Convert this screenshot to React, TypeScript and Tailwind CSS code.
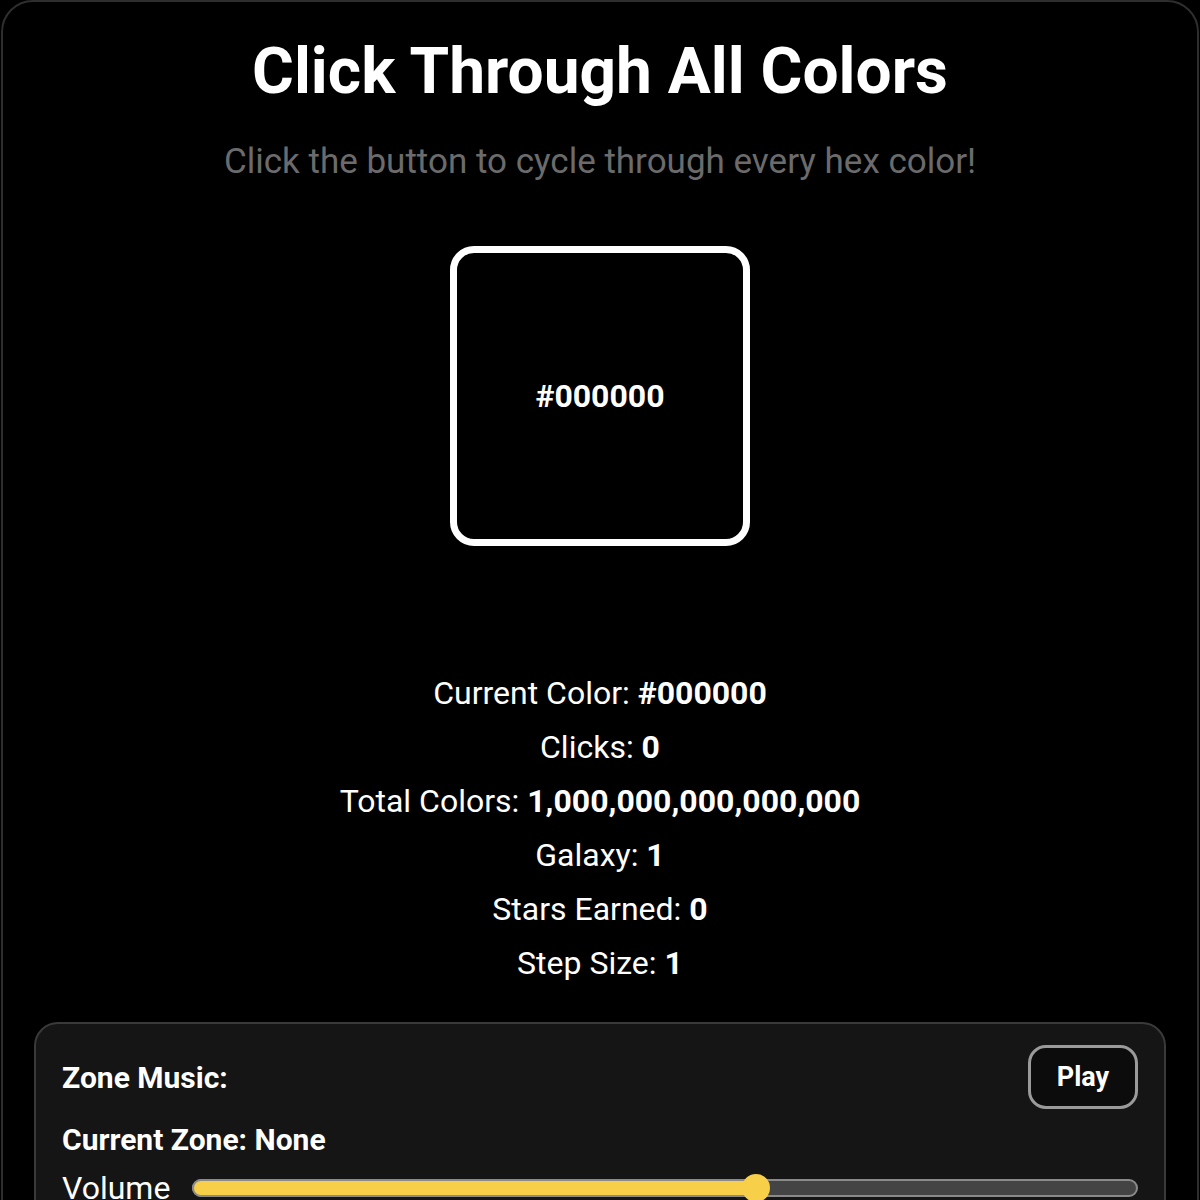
import { useState } from "react"

const stats = [
    { label: "Current Color:", value: "#000000" },
    { label: "Clicks:", value: "0" },
    { label: "Total Colors:", value: "1,000,000,000,000,000" },
    { label: "Galaxy:", value: "1" },
    { label: "Stars Earned:", value: "0" },
    { label: "Step Size:", value: "1" },
]

const App = () => {
    const [volume, setVolume] = useState(59.6)
  return (
    <div className="min-h-[1200px] bg-black overflow-hidden" style={{ fontFamily: 'Roboto, "Noto Sans", sans-serif' }}>
        <div className="mx-[1px] min-h-[1250px] rounded-[32px] border-2 border-[#2e2e2e] bg-black text-white flex flex-col items-center pt-[32px] px-[31px]">
            <h1 className="text-[64px] font-bold leading-[76px]">Click Through All Colors</h1>
            <p className="mt-[31px] text-[35px] leading-[42px] text-[#6b6b6b]">Click the button to cycle through every hex color!</p>
            <button className="mt-[63px] w-[300px] h-[300px] rounded-[24px] border-[7px] border-white bg-black flex items-center justify-center text-[32px] font-bold text-white">
                #000000
            </button>
            <div className="mt-[128px] flex flex-col items-center gap-[16px] text-[32px] leading-[38px]">
                {stats.map((s) => (
                    <div key={s.label}>{s.label} <span className="font-bold">{s.value}</span></div>
                ))}
            </div>
            <div className="mt-[40px] w-full rounded-[24px] border-2 border-[#3a3a3a] bg-[#151515] px-[26px] pt-[21px] pb-[30px]">
                <div className="flex items-center justify-between">
                    <span className="text-[30px] font-bold">Zone Music:</span>
                    <button className="w-[110px] h-[64px] rounded-[18px] border-[3px] border-[#9a9a9a] bg-[#0c0c0c] text-[27px] font-bold text-white">Play</button>
                </div>
                <div className="mt-[13px] text-[30px] font-bold leading-[36px]">Current Zone: None</div>
                <div className="mt-[11px] flex items-center gap-[22px]">
                    <span className="text-[32px] leading-[38px]">Volume</span>
                    <div className="relative flex-1 h-[18px]">
                        <div className="absolute inset-0 rounded-full bg-[#444] border-2 border-[#8a8a8a]" />
                        <div className="absolute left-0 top-0 bottom-0 rounded-full bg-[#f8cf48] border-2 border-[#8a8a8a]" style={{ width: `${volume}%` }} />
                        <div className="absolute top-1/2 w-[28px] h-[28px] -translate-x-1/2 -translate-y-1/2 rounded-full bg-[#f8cf48]" style={{ left: `${volume}%` }} />
                        <input type="range" min={0} max={100} step={0.1} value={volume} onChange={(e) => setVolume(Number(e.target.value))} className="absolute inset-0 w-full opacity-0 cursor-pointer" />
                    </div>
                </div>
            </div>
        </div>
    </div>
  )
}

export default App
